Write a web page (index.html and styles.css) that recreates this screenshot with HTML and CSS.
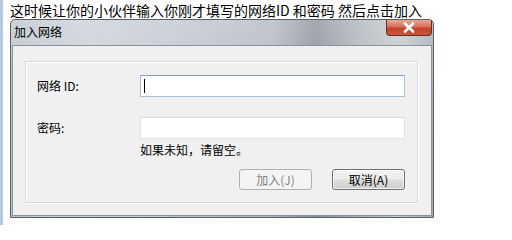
FILE: index.html
```html
<!DOCTYPE html>
<html lang="zh-CN">
<head>
<meta charset="utf-8">
<title>加入网络</title>
<link rel="stylesheet" href="styles.css">
</head>
<body>
<div class="page">
  <p class="caption">这时候让你的小伙伴输入你刚才填写的网络ID 和密码 然后点击加入</p>
  <div class="window">
    <div class="titlebar">
      <span class="title">加入网络</span>
      <span class="close">
        <svg width="14" height="11" viewBox="0 0 14 11"><path d="M3 1.5 L11 9.5 M11 1.5 L3 9.5" stroke="#fff" stroke-width="2.6" stroke-linecap="round"/></svg>
      </span>
    </div>
    <div class="panel">
      <div class="group">
        <div class="form">
          <label class="label">网络 ID:</label>
          <div class="input focused"><span class="caret"></span></div>
          <label class="label">密码:</label>
          <div class="input"></div>
          <span></span>
          <div class="hint">如果未知，请留空。</div>
        </div>
        <div class="buttons">
          <span class="btn disabled">加入(J)</span>
          <span class="btn">取消(A)</span>
        </div>
      </div>
    </div>
  </div>
</div>
</body>
</html>
```
FILE: styles.css
```css
html, body {
  margin: 0;
  padding: 0;
  background: #fff;
}
body {
  width: 512px;
  height: 225px;
  overflow: hidden;
  box-sizing: border-box;
  border-left: 3px solid #b3c9e4;
  font-family: "Noto Sans CJK SC", "Liberation Sans", sans-serif;
}
.page {
  padding-left: 7px;
}
.caption {
  margin: 0;
  padding-top: 2px;
  font-size: 14px;
  line-height: 17px;
  color: #000;
  white-space: nowrap;
}
.window {
  width: 424px;
  height: 199px;
  box-sizing: border-box;
  border: 1px solid #5a5f66;
  border-radius: 5px 5px 0 0;
  padding: 0 1px 1px 1px;
  display: flex;
  flex-direction: column;
  background:
    linear-gradient(to bottom, rgba(255,255,255,0.25), rgba(255,255,255,0) 60%),
    linear-gradient(to right, #b9c2ca 0%, #c8cfd5 18%, #bcc4cb 40%, #aeb6bd 62%, #858d94 72%, #a9b0b6 82%, #c2c8cd 92%, #a3abb2 100%);
}
.titlebar {
  height: 25px;
  display: flex;
  justify-content: space-between;
  align-items: flex-start;
  padding-left: 2px;
}
.title {
  font-size: 12px;
  line-height: 14px;
  padding-top: 5px;
  color: #000;
}
.close {
  width: 46px;
  height: 16px;
  box-sizing: border-box;
  margin-right: 0;
  border: 1px solid #6a2b20;
  border-top: 0;
  border-radius: 0 0 4px 4px;
  background: linear-gradient(to bottom, #e9a796 0%, #d7705c 45%, #c2432c 55%, #c9563c 100%);
  display: flex;
  align-items: center;
  justify-content: center;
}
.panel {
  flex: 1;
  border: 1px solid #8a929a;
  background: #f0f0f0;
  padding: 15px 13px 12px 12px;
  display: flex;
}
.group {
  flex: 1;
  border: 1px solid #d5d9dc;
  box-shadow: inset 1px 1px 0 #fff, 1px 1px 0 #fff;
  padding: 13px 11px 0 11px;
}
.form {
  display: grid;
  grid-template-columns: 103px 265px;
  grid-template-rows: 22px 22px auto;
  row-gap: 20px;
  align-items: center;
}
.form > .hint {
  margin-top: -18px;
}
.label {
  font-size: 12px;
  line-height: 14px;
  color: #000;
}
.input {
  height: 22px;
  box-sizing: border-box;
  background: #fff;
  border: 1px solid #e2e3e6;
  border-top-color: #d6d8db;
  display: flex;
  align-items: center;
  padding-left: 3px;
}
.input.focused {
  border-color: #a7c2de;
  border-top-color: #7da2ce;
}
.caret {
  width: 1px;
  height: 14px;
  background: #000;
}
.hint {
  font-size: 12px;
  line-height: 16px;
  color: #000;
}
.buttons {
  display: flex;
  justify-content: flex-end;
  gap: 20px;
  margin-top: 10px;
  padding-right: 1px;
}
.btn {
  width: 73px;
  height: 21px;
  box-sizing: border-box;
  border: 1px solid #707070;
  border-radius: 3px;
  background: linear-gradient(to bottom, #f3f3f3 0%, #ebebeb 48%, #dddddd 52%, #cfcfcf 100%);
  box-shadow: inset 0 0 0 1px rgba(255,255,255,0.7);
  font-size: 12px;
  line-height: 19px;
  text-align: center;
  color: #000;
}
.btn.disabled {
  border-color: #adb2b5;
  background: #f4f4f4;
  box-shadow: none;
  color: #838383;
}
```
